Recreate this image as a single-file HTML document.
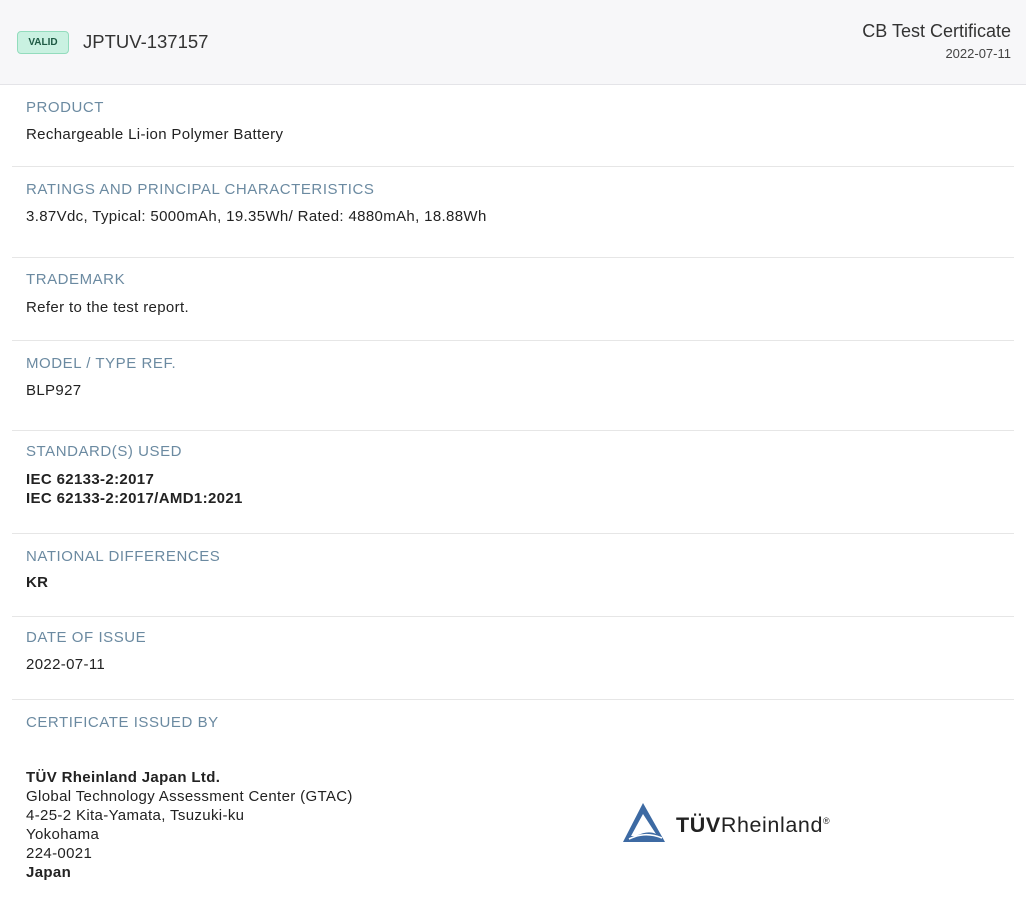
<!DOCTYPE html>
<html><head><meta charset="utf-8"><style>
body{margin:0;width:1026px;height:900px;background:#fff;font-family:"Liberation Sans",sans-serif;position:relative;overflow:hidden;color:#222}
.hdr{position:absolute;left:0;top:0;width:1026px;height:84px;background:#f7f7f9;border-bottom:1px solid #e4e4e8}
.badge{position:absolute;left:17px;top:31px;width:52px;height:23px;box-sizing:border-box;background:#c9f1e1;border:1px solid #93dcbd;border-radius:4px;color:#1e5a44;font-size:10px;font-weight:bold;text-align:center;line-height:22px}
.t{position:absolute;white-space:nowrap}
.lbl{position:absolute;left:26px;color:#6b8aa1;font-size:15px;letter-spacing:0.55px}
.val{position:absolute;left:26px;font-size:15px;letter-spacing:0.35px;color:#222;line-height:19px;white-space:nowrap}
.ln{position:absolute;left:12px;width:1002px;height:1px;background:#e6e6e6}
b{font-weight:bold}
</style></head><body>
<div class="hdr">
<div class="badge">VALID</div>
<div class="t" style="left:83px;top:31px;font-size:18.5px;color:#333">JPTUV-137157</div>
<div class="t" style="right:15px;top:21px;font-size:18px;color:#333">CB Test Certificate</div>
<div class="t" style="right:15px;top:46px;font-size:13px;color:#444">2022-07-11</div>
</div>
<div class="lbl" style="top:99px">PRODUCT</div>
<div class="val" style="top:125px">Rechargeable Li-ion Polymer Battery</div>
<div class="ln" style="top:166px"></div>
<div class="lbl" style="top:181px">RATINGS AND PRINCIPAL CHARACTERISTICS</div>
<div class="val" style="top:207px">3.87Vdc, Typical: 5000mAh, 19.35Wh/ Rated: 4880mAh, 18.88Wh</div>
<div class="ln" style="top:257px"></div>
<div class="lbl" style="top:271px">TRADEMARK</div>
<div class="val" style="top:298px">Refer to the test report.</div>
<div class="ln" style="top:340px"></div>
<div class="lbl" style="top:355px">MODEL / TYPE REF.</div>
<div class="val" style="top:381px">BLP927</div>
<div class="ln" style="top:430px"></div>
<div class="lbl" style="top:443px">STANDARD(S) USED</div>
<div class="val" style="top:470px"><b>IEC 62133-2:2017<br>IEC 62133-2:2017/AMD1:2021</b></div>
<div class="ln" style="top:533px"></div>
<div class="lbl" style="top:548px">NATIONAL DIFFERENCES</div>
<div class="val" style="top:573px"><b>KR</b></div>
<div class="ln" style="top:616px"></div>
<div class="lbl" style="top:629px">DATE OF ISSUE</div>
<div class="val" style="top:655px">2022-07-11</div>
<div class="ln" style="top:699px"></div>
<div class="lbl" style="top:714px">CERTIFICATE ISSUED BY</div>
<div class="val" style="top:768px"><b>TÜV Rheinland Japan Ltd.</b><br>Global Technology Assessment Center (GTAC)<br>4-25-2 Kita-Yamata, Tsuzuki-ku<br>Yokohama<br>224-0021<br><b>Japan</b></div>
<svg style="position:absolute;left:620px;top:800px" width="50" height="45" viewBox="0 0 50 45">
<path d="M23 3 L45 42 L3 42 Z M23 14 L11 36 L16 36 Q28 30 36 34 Z" fill="#3d6aa3" fill-rule="evenodd"/>
<path d="M9 39 Q25 31 42 38" stroke="#fff" stroke-width="1.6" fill="none"/>
</svg>
<div class="t" style="left:676px;top:813px;font-size:21.5px;letter-spacing:0.6px;color:#222"><b>TÜV</b>Rheinland<sup style="font-size:9px">®</sup></div>
</body></html>
